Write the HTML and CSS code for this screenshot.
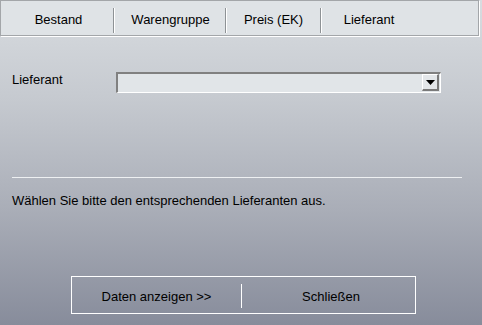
FILE: index.html
```html
<!DOCTYPE html>
<html lang="de">
<head>
    <meta charset="UTF-8">
    <title>Lieferant</title>
    <link rel="stylesheet" href="styles.css">
</head>
<body>
    <div class="tabs">
        <div class="tab tab-wide">Bestand</div>
        <div class="tab tab-wide">Warengruppe</div>
        <div class="tab tab-preis">Preis (EK)</div>
        <div class="tab tab-last">Lieferant</div>
    </div>

    <div class="form-row">
        <label class="label">Lieferant</label>
        <div class="combo">
            <div class="combo-btn">
                <svg width="9" height="5" viewBox="0 0 9 5"><polygon points="0,0 9,0 4.5,5" fill="#000"/></svg>
            </div>
        </div>
    </div>

    <div class="divider"></div>
    <p class="hint">Wählen Sie bitte den entsprechenden Lieferanten aus.</p>

    <div class="buttons">
        <div class="btn btn-left">Daten anzeigen &gt;&gt;</div>
        <div class="btn btn-right">Schließen</div>
    </div>
</body>
</html>
```

FILE: styles.css
```css
html, body {
    margin: 0;
    padding: 0;
}

body {
    width: 482px;
    height: 325px;
    font-family: 'Liberation Sans', Arial, sans-serif;
    font-size: 13px;
    color: #000;
    background: linear-gradient(180deg, #d8dce0 0%, #c6cad0 30%, #a9adb7 65%, #878c9b 100%);
    overflow: hidden;
}

.tabs {
    display: flex;
    height: 36px;
    width: 479px;
    box-sizing: border-box;
    border: 1px solid #a3a6a9;
    background: #dfe3e6;
    box-shadow: 1px 1px 0 #ffffff;
}

.tab {
    display: flex;
    align-items: center;
    justify-content: center;
    padding-top: 3px;
    box-sizing: border-box;
    position: relative;
}

.tab-wide {
    width: 112px;
    padding-left: 3px;
}

.tab-preis {
    width: 95px;
    padding-left: 2px;
}

.tab-last {
    width: 98px;
}

.tab + .tab::before {
    content: "";
    position: absolute;
    left: 0;
    top: 7px;
    bottom: 2px;
    width: 1px;
    border-right: 1px solid #ffffff;
    background: #8e9295;
}

.form-row {
    display: flex;
    align-items: center;
    margin-top: 36px;
    padding-left: 12px;
}

.label {
    width: 104px;
    margin-top: -7px;
}

.combo {
    width: 325px;
    height: 21px;
    box-sizing: border-box;
    border-top: 2px solid #808080;
    border-left: 2px solid #808080;
    border-bottom: 1px solid #ffffff;
    border-right: 1px solid #ffffff;
    background: #e1e5e8;
    display: flex;
    justify-content: flex-end;
    padding: 0 1px 1px 0;
}

.combo-btn {
    width: 17px;
    height: 17px;
    box-sizing: border-box;
    border-top: 1px solid #ffffff;
    border-left: 1px solid #ffffff;
    border-right: 2px solid #7a7a7a;
    border-bottom: 2px solid #7a7a7a;
    background: #e3e6e9;
    display: flex;
    align-items: center;
    justify-content: center;
}

.divider {
    margin: 84px 20px 0 12px;
    height: 1px;
    background: #eef0f2;
}

.hint {
    margin: 15px 0 0 12px;
}

.buttons {
    display: flex;
    width: 345px;
    height: 38px;
    margin: 68px 0 0 71px;
    box-sizing: border-box;
    border: 1px solid #ffffff;
}

.btn {
    flex: 1;
    display: flex;
    align-items: center;
    justify-content: center;
    position: relative;
    padding-top: 3px;
}

.btn-left {
    flex: 0 0 169px;
}

.btn-right {
    padding-left: 6px;
}

.btn + .btn::before {
    content: "";
    position: absolute;
    left: 0;
    top: 7px;
    bottom: 5px;
    width: 1px;
    background: #ffffff;
}
```
